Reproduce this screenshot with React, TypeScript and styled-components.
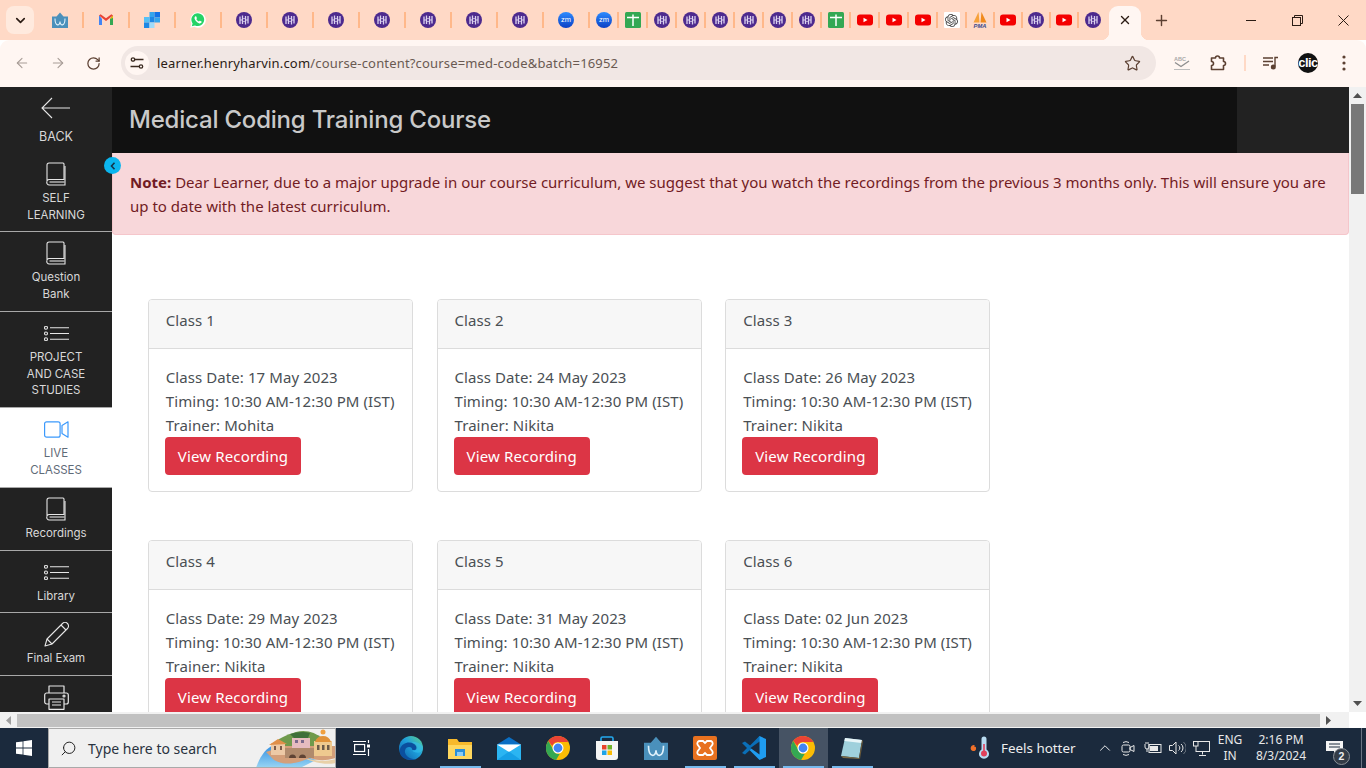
import React from "react";
import styled, { createGlobalStyle } from "styled-components";
import { ArrowRight, ArrowLeft, RotateCw, Star, Plus, ChevronDown, ChevronUp, Search, X } from "lucide-react";
import { SiOpenai } from "react-icons/si";

const Global = createGlobalStyle`
  html, body { margin: 0; padding: 0; height: 100%; overflow: hidden; background: #fff; }
  * { box-sizing: border-box; }
  body { font-family: "Noto Sans", "Open Sans", sans-serif; }
`;

const Shell = styled.div`
  width: 1366px; height: 768px; display: flex; flex-direction: column; overflow: hidden;
`;

/* ---------- browser chrome ---------- */
const TabStrip = styled.div`
  height: 40px; background: #ffd9c6; display: flex; align-items: center; flex: none;
`;
const TabSearch = styled.div`
  width: 28px; height: 28px; margin: 0 4px 0 6px; border-radius: 8px; background: #ffeade;
  display: flex; align-items: center; justify-content: center; color: #2b1c14;
`;
const Tab = styled.div<{ $w: number; $plain?: boolean }>`
  width: ${p => p.$w}px; height: 16px; flex: none; display: flex; align-items: center; justify-content: center;
  border-right: ${p => (p.$plain ? "0" : "2px solid #ffb88a")};
  svg { flex: none; }
`;
const GptBox = styled.div`
  width: 16px; height: 16px; background: #fff; border-radius: 1px; display: flex; align-items: center; justify-content: center; color: #444;
`;
const ActiveTab = styled.div`
  position: relative; width: 32px; height: 34px; margin: 6px 0 0 2px; border-radius: 9px 9px 0 0; background: #fff6f2;
  display: flex; align-items: center; justify-content: center; color: #2b1c14; padding-bottom: 6px;
  &::before, &::after { content: ""; position: absolute; bottom: 0; width: 8px; height: 8px; }
  &::before { left: -8px; background: radial-gradient(circle at 0 0, #ffd9c6 8px, #fff6f2 8.5px); }
  &::after { right: -8px; background: radial-gradient(circle at 100% 0, #ffd9c6 8px, #fff6f2 8.5px); }
`;
const NewTab = styled.div`
  width: 28px; margin-left: 6px; display: flex; justify-content: center; color: #5c4032;
`;
const WinButtons = styled.div`
  margin-left: auto; display: flex; color: #2b1c14; height: 40px;
`;
const WinBtn = styled.div`
  width: 46px; display: flex; align-items: center; justify-content: center;
`;
const Toolbar = styled.div`
  height: 47px; background: #fff6f2; border-radius: 9px 9px 0 0; display: flex; align-items: flex-start; flex: none; padding-top: 6px; position: relative; z-index: 1;
`;
const NavBtn = styled.div<{ $w: number; $off?: boolean; $lead?: number }>`
  width: ${p => p.$w}px; height: 34px; flex: none; display: flex; align-items: center; justify-content: center;
  margin-left: ${p => p.$lead ?? 0}px;
  color: ${p => (p.$off ? "#a79c96" : "#5c4032")};
`;
const Omnibox = styled.div`
  width: 1035px; height: 34px; margin: 0 8px 0 9px; flex: none; background: #f1e7e4; border-radius: 17px; display: flex; align-items: center; padding: 0 4px; color: #5c4032;
`;
const SiteInfo = styled.div`
  width: 24px; height: 24px; border-radius: 50%; background: #fff6f2; display: flex; align-items: center; justify-content: center; flex: none;
`;
const Url = styled.div`
  margin-left: 8px; font-size: 13px; letter-spacing: 0.17px; color: #6a5a52; white-space: nowrap; flex: 1;
  b { font-weight: 400; color: #2b1c14; }
`;
const Divider = styled.div`
  width: 2px; height: 16px; background: #ffd9c6; margin: 9px 12px 9px 8px; flex: none;
`;
const Avatar = styled.div`
  width: 20px; height: 20px; border-radius: 50%; background: #111; color: #fff; overflow: hidden;
  font: 700 13px/20px "Liberation Sans", sans-serif; text-align: center; letter-spacing: -.6px;
`;

/* ---------- viewport ---------- */
const Viewport = styled.div`
  height: 625px; flex: none; display: flex; overflow: hidden;
`;
const Page = styled.div`
  width: 1349px; flex: none; display: flex; position: relative; overflow: hidden;
`;
const Sidebar = styled.nav`
  width: 112px; flex: none; background: #222; display: flex; flex-direction: column;
`;
const NavItem = styled.div<{ $h: number; $active?: boolean; $line?: boolean }>`
  height: ${p => p.$h}px; flex: none; padding-top: 9px; display: flex; flex-direction: column; align-items: center; gap: 4px;
  background: ${p => (p.$active ? "#fff" : "#222")};
  color: ${p => (p.$active ? "#5f6b78" : "#d8d8d8")};
  border-bottom: ${p => (p.$line ? "1px solid #a8a8a8" : "0")};
`;
const NavIcon = styled.div<{ $active?: boolean; $shift?: number }>`
  height: 24px; flex: none; display: flex; align-items: center; justify-content: center;
  margin-right: ${p => p.$shift ?? 0}px;
  color: ${p => (p.$active ? "#3b99fc" : "#e6e6e6")};
`;
const NavLabel = styled.div<{ $size?: number; $top?: number }>`
  font: 400 ${p => p.$size ?? 11.5}px/16.5px "Inter", sans-serif; text-align: center; letter-spacing: -0.03px;
  margin-top: ${p => p.$top ?? 0}px;
  max-width: 100px;
`;
const Toggle = styled.div`
  position: absolute; left: 104px; top: 70px; width: 17px; height: 17px; border-radius: 50%; background: #0bb5ee; color: #14344a;
  display: flex; align-items: center; justify-content: center;
`;
const Main = styled.main`
  flex: 1; min-width: 0; display: flex; flex-direction: column;
`;
const TitleBar = styled.header`
  height: 66px; flex: none; display: flex; background: #222;
`;
const TitleBlock = styled.div`
  width: 1125px; background: #111; display: flex; align-items: center; padding-left: 17px;
`;
const Title = styled.h1`
  margin: 0; font: 500 24px/1 "Inter", sans-serif; color: #c9c9c9; letter-spacing: -0.2px; white-space: nowrap;
`;
const Alert = styled.div`
  height: 82px; flex: none; background: #f8d7da; border: 1px solid #f5c6cb; border-top: 0; border-radius: 0 0 4px 4px;
  padding: 17px 17px 0; color: #721c24; font-size: 15px; line-height: 24px; white-space: nowrap;
  b { font-weight: 700; }
`;
const CardGrid = styled.div`
  display: grid; grid-template-columns: repeat(3, 265px); column-gap: 23.7px; row-gap: 48px; padding: 64px 0 0 36px;
`;
const Card = styled.article`
  border: 1px solid #dcdcdc; border-radius: 4px; background: #fff; overflow: hidden; height: 193px;
`;
const CardHeader = styled.div`
  height: 49px; background: #f7f7f7; border-bottom: 1px solid #dcdcdc; padding: 8px 16.8px; font-size: 15px; line-height: 24px; color: #4a4f54; letter-spacing: .08px;
`;
const CardBody = styled.div`
  padding: 16px 16.8px; font-size: 15px; line-height: 24px; color: #4a4f54; white-space: nowrap; letter-spacing: .08px;
`;
const DangerButton = styled.div`
  display: inline-block; height: 38px; width: 136px; margin-left: -.8px; border-radius: 4px; background: #dc3545; color: #fff;
  font-size: 15px; line-height: 38px; text-align: center; letter-spacing: .15px;
`;
const VScroll = styled.div`
  width: 17px; flex: none; background: #f1f1f1; display: flex; flex-direction: column; align-items: center;
`;
const ArrowCell = styled.div`
  height: 17px; flex: none; width: 100%; display: flex; align-items: center; justify-content: center;
`;
const VThumb = styled.div`
  width: 13px; height: 90px; background: #787878; flex: none;
`;
const ScrollGap = styled.div`
  flex: 1;
`;
const HScroll = styled.div`
  height: 16px; flex: none; background: #f1f1f1; display: flex; align-items: center;
`;
const HThumb = styled.div`
  width: 1303px; height: 13px; background: #c1c1c1; flex: none;
`;
const HArrow = styled.div`
  width: 17px; height: 16px; flex: none; display: flex; align-items: center; justify-content: center;
`;
const HCorner = styled.div`
  margin-left: 12px; width: 17px; height: 16px; background: #fff; flex: none;
`;

/* ---------- taskbar ---------- */
const Taskbar = styled.footer`
  height: 40px; flex: none; background: #1b2a3d; display: flex; align-items: stretch; color: #fff;
`;
const StartCell = styled.div`
  width: 48px; display: flex; align-items: center; justify-content: center; flex: none;
`;
const SearchBox = styled.div`
  width: 288px; flex: none; background: #f0f0f0; border: 1px solid #a9a9a9; display: flex; align-items: center; padding-left: 11px; position: relative; overflow: hidden; color: #222;
`;
const SearchIcon = styled(Search)`
  transform: scaleX(-1);
`;
const SearchText = styled.span`
  margin-left: 11px; font-size: 14px; color: #2a3340;
`;
const SearchArt = styled.div`
  position: absolute; right: -1px; top: -1px; height: 40px;
`;
const TaskCell = styled.div<{ $w?: number; $on?: boolean; $open?: boolean }>`
  width: ${p => p.$w ?? 49}px; flex: none; position: relative; display: flex; align-items: center; justify-content: center;
  background: ${p => (p.$on ? "#465364" : "transparent")};
  &::after { content: ""; display: ${p => (p.$open ? "block" : "none")}; position: absolute; bottom: 0; left: 4px; right: 4px; height: 2px; background: #76b9ed; }
`;
const Tray = styled.div`
  margin-left: auto; display: flex; align-items: stretch; flex: none;
`;
const TrayCell = styled.div<{ $w: number }>`
  width: ${p => p.$w}px; flex: none; display: flex; align-items: center; justify-content: center; position: relative;
`;
const Weather = styled.div`
  width: 126px; flex: none; display: flex; align-items: center; gap: 11px; padding-left: 3px; font-size: 13.4px; color: #eee; white-space: nowrap;
`;
const TrayText = styled.div`
  font-size: 12px; line-height: 16px; text-align: center; color: #e8e8e8; white-space: nowrap;
`;
const Badge = styled.div`
  position: absolute; left: 17px; top: 20px; width: 17px; height: 17px; border-radius: 50%; background: #333c47; border: 1px solid #8a8f96;
  font: 700 10.5px/15px "Liberation Sans", sans-serif; text-align: center; color: #eee;
`;
const DesktopEdge = styled.div`
  width: 14px; flex: none; position: relative;
  &::before { content: ""; position: absolute; left: 9px; top: 0; bottom: 0; width: 1px; background: #6a7584; }
`;

/* ---------- drawings ---------- */
const HH = () => (
  <svg width="16" height="16" viewBox="0 0 16 16">
    <circle cx="8" cy="8" r="8" fill="#4d2a8e" />
    <g stroke="#d9d0ee" fill="none">
      <path d="M4 4.500v7.500M6.500 3.500v8.500M9.500 4v8.500M12 4v7.500" strokeWidth="1.300" />
      <path d="M4 8h2.500M9.500 8H12" strokeWidth="1" />
      <path d="M6.500 6.500h3M6.500 9.500h3" strokeWidth=".7" />
    </g>
  </svg>
);
const Wonder = ({ s = 16 }: { s?: number }) => (
  <svg width={s} height={s} viewBox="0 0 16 16">
    <path d="M0 4.500h4.500L8 .5l3.500 4H16V16H0z" fill="#4a90bb" />
    <path d="M3 6.500c0 8.500 5 7.500 5 3 0 4.500 5 5.500 5-3" stroke="#dff1fb" strokeWidth="1.100" fill="none" />
  </svg>
);
const Gmail = () => (
  <svg width="16" height="16" viewBox="0 0 16 16">
    <path d="M1 3v10h3V7z" fill="#4285f4" /><path d="M15 3v10h-3V7z" fill="#34a853" />
    <path d="M1 3.500L8 9l7-5.500-1.600-1.300L8 6.200 2.600 2.200z" fill="#ea4335" /><path d="M12 7l3-3.500V6z" fill="#fbbc04" />
  </svg>
);
const Squares = () => (
  <svg width="16" height="16" viewBox="0 0 16 16">
    <rect x="5.500" y="0" width="5" height="5" fill="#35a5ec" /><rect x="10.500" y="0" width="5.500" height="5.500" fill="#1473e6" />
    <rect x="5.500" y="5" width="5" height="5.500" fill="#1e88e5" /><rect x="10.500" y="5.500" width="5.500" height="5" fill="#35a5ec" />
    <rect x="0" y="5" width="5.500" height="5.500" fill="#55c0f5" /><rect x="0" y="10.500" width="5.500" height="5.500" fill="#1e88e5" />
    <rect x="5.500" y="10.500" width="5" height="5.500" fill="#9fdcfb" />
  </svg>
);
const Whats = () => (
  <svg width="16" height="16" viewBox="0 0 16 16">
    <path d="M.3 15.700l1.100-4A7.700 7.700 0 1 1 4.400 14.700z" fill="#fff" />
    <path d="M1.800 14.200l.8-2.800A6.400 6.400 0 1 1 5 13.400z" fill="#25d366" />
    <path d="M5.500 4.300c-.9.600-1.300 1.700-.7 3 .8 1.800 2.200 3.200 4 3.900 1.300.5 2.300 0 2.800-1 .2-.4.100-.6-.1-.7l-1.500-.8c-.3-.1-.4 0-.6.200l-.5.600c-1.200-.5-2.100-1.400-2.600-2.500l.5-.5c.2-.2.2-.4.100-.6l-.7-1.500c-.1-.3-.4-.3-.7-.1z" fill="#fff" />
  </svg>
);
const Zoom = () => (
  <svg width="16" height="16" viewBox="0 0 16 16">
    <defs><linearGradient id="zg" x1="0" y1="0" x2="0" y2="1"><stop offset="0" stopColor="#2d8cff" /><stop offset="1" stopColor="#0b3fc4" /></linearGradient></defs>
    <circle cx="8" cy="8" r="8" fill="url(#zg)" />
    <text x="8" y="10.200" textAnchor="middle" fontSize="7.500" fontWeight="400" fill="#fff" fontFamily="Liberation Sans">zm</text>
  </svg>
);
const Cross = () => (
  <svg width="16" height="16" viewBox="0 0 16 16">
    <rect width="16" height="16" rx="1.500" fill="#34a853" />
    <path d="M2 5.500h12M8 2.500v11.500" stroke="#fff" strokeWidth="1.500" />
  </svg>
);
const YT = () => (
  <svg width="16" height="16" viewBox="0 0 16 16">
    <rect x="0" y="2.500" width="16" height="11" rx="3" fill="#f40000" />
    <path d="M6.500 5.800L10.500 8l-4 2.200z" fill="#fff" />
  </svg>
);
const GPT = () => <GptBox><SiOpenai size={13} /></GptBox>;
const PMA = () => (
  <svg width="16" height="16" viewBox="0 0 16 16">
    <path d="M1.500 10.500L6.500 0l1 10.500z" fill="#f6a13a" /><path d="M8.500 10.500L9.500 0 14.500 10.500z" fill="#f08a1d" />
    <text x="8" y="15.500" textAnchor="middle" fontSize="5.800" fontWeight="700" fontStyle="italic" fill="#3b4a8c" fontFamily="Liberation Sans">PMA</text>
  </svg>
);

const Tune = () => (
  <svg width="16" height="16" viewBox="0 0 16 16" fill="none" stroke="#3a2a20" strokeWidth="1.300">
    <circle cx="4" cy="4.500" r="1.700" /><path d="M6 4.500h8.500M1.500 11.500h8.500" /><circle cx="12" cy="11.500" r="1.700" />
  </svg>
);
const Abc = () => (
  <svg width="18" height="16" viewBox="0 0 18 16">
    <text x="1" y="6" fontSize="5.500" fill="#a8a8a8" fontWeight="700" fontFamily="Liberation Sans">ABC</text>
    <path d="M2 7.500l6 4L16 6" stroke="#8f8f8f" strokeWidth="1.400" fill="none" /><path d="M1 14.500h16" stroke="#bdbdbd" strokeWidth="1" />
  </svg>
);
const Puzzle = () => (
  <svg width="18" height="18" viewBox="0 0 18 18" fill="none" stroke="#5c4032" strokeWidth="1.600">
    <path d="M2.500 4h4a2 2 0 0 1 4 0h4v3.500a2 2 0 0 1 0 4v4h-12v-4a2 2 0 0 0 0-4z" strokeLinejoin="round" />
  </svg>
);
const Media = () => (
  <svg width="16" height="14" viewBox="0 0 16 14" fill="none" stroke="#5c4032" strokeWidth="1.400">
    <path d="M0 2h10M0 5.500h10M0 9h6" /><path d="M12 10.500V1.500h3" /><circle cx="10.300" cy="11" r="1.800" fill="#5c4032" />
  </svg>
);
const Dots = () => (
  <svg width="4" height="16" viewBox="0 0 4 16" fill="#5c4032"><circle cx="2" cy="2" r="1.600" /><circle cx="2" cy="8" r="1.600" /><circle cx="2" cy="14" r="1.600" /></svg>
);
const Minimize = () => (
  <svg width="11" height="11" viewBox="0 0 11 11" fill="#2b1c14"><rect x="0" y="5" width="10" height="1" /></svg>
);
const Restore = () => (
  <svg width="11" height="11" viewBox="0 0 11 11" fill="none" stroke="#2b1c14" strokeWidth="1">
    <rect x=".5" y="2.500" width="8" height="8" /><path d="M2.500 2.500v-2h8v8h-2" />
  </svg>
);
const CloseWin = () => (
  <svg width="11" height="11" viewBox="0 0 11 11" fill="none" stroke="#2b1c14" strokeWidth="1"><path d="M.5 .5l10 10M10.500 .5l-10 10" /></svg>
);

const BackArrow = () => (
  <svg width="29" height="22" viewBox="0 0 29 22" fill="none" stroke="currentColor" strokeWidth="1.100"><path d="M29 11H1M11 1L1 11l10 10" /></svg>
);
const Book = () => (
  <svg width="20" height="24" viewBox="0 0 20 24" fill="none" stroke="currentColor" strokeWidth="1.100">
    <path d="M3 1h14a1.500 1.500 0 0 1 1 1v15.500H3a2 2 0 0 0-2 2V3a2 2 0 0 1 2-2z" />
    <path d="M1 19.500A2.500 2.500 0 0 0 3.500 23H19V4" />
    <path d="M3.500 20h15" />
  </svg>
);
const ListI = () => (
  <svg width="25" height="15" viewBox="0 0 25 15" fill="none" stroke="currentColor" strokeWidth="1.100">
    <circle cx="2" cy="1.800" r="1.500" /><circle cx="2" cy="7.500" r="1.500" /><circle cx="2" cy="13.200" r="1.500" />
    <path d="M6 1.800h19M6 7.500h19M6 13.200h19" />
  </svg>
);
const Cam = () => (
  <svg width="25" height="17" viewBox="0 0 25 17" fill="none" stroke="currentColor" strokeWidth="1.200">
    <rect x=".6" y=".8" width="15.500" height="15.400" rx="2" /><path d="M24 .8v15.400L18 12.500v-8z" strokeLinejoin="round" />
  </svg>
);
const Pencil = () => (
  <svg width="25" height="25" viewBox="0 0 25 25" fill="none" stroke="currentColor" strokeWidth="1.100" strokeLinejoin="round">
    <path d="M1 24l2-7L18.500 1.500a3 3 0 0 1 5 5L8 22z" /><path d="M3 17l5 5M17 3l5 5" />
  </svg>
);
const Printer = () => (
  <svg width="25" height="25" viewBox="0 0 25 25" fill="none" stroke="currentColor" strokeWidth="1.200" strokeLinejoin="round">
    <path d="M5 8V1h15v7" /><rect x=".7" y="8" width="23.600" height="11" rx="2" /><rect x="5" y="14" width="15" height="10.300" fill="#222" />
    <path d="M8 17h9M8 20h9" /><circle cx="20" cy="11" r="1" />
  </svg>
);

const Win = () => (
  <svg width="16" height="16" viewBox="0 0 16 16" fill="#fff"><path d="M0 2.300l6.600-.9v6.200H0zM7.400 1.300L16 0v7.600H7.400zM0 8.400h6.600v6.200L0 13.700zM7.400 8.400H16V16l-8.600-1.200z" /></svg>
);
const Lake = () => (
  <svg width="82" height="40" viewBox="0 0 82 40">
    <defs><linearGradient id="sea" x1="0" y1="0" x2="0" y2="1"><stop offset="0" stopColor="#2f8de0" /><stop offset="1" stopColor="#9ad6f4" /></linearGradient></defs>
    <path d="M2 40C6 28 12 20 20 17L62 32 46 40z" fill="url(#sea)" />
    <path d="M52 30c8 3 18 4 30 1v4c-10 2-20 0-30-4z" fill="#e8d0a8" />
    <path d="M18 18C24 10 32 7 42 4c10-3 20 1 26 6v10H30z" fill="#6f9a4c" />
    <path d="M36 6c6-2 14-3 20-1l-2 5H40z" fill="#3f6f3a" />
    <path d="M12 24l8 8c8 5 20 4 28 1l8-3c8 3 16 3 26 0V18H30z" fill="#d49f7a" />
    <rect x="17" y="15" width="14" height="12" fill="#edc9a6" /><path d="M15 17l9-6 9 5z" fill="#e08f4a" />
    <path d="M20 18h2v4h-2zM26 18h2v4h-2z" fill="#7a5a4a" />
    <rect x="38" y="10" width="18" height="10" fill="#e6bcc0" /><path d="M41 12h3v3h-3zM47 12h3v3h-3z" fill="#7b6a8c" />
    <rect x="31" y="20" width="29" height="10" fill="#b08a6c" /><path d="M35 30a3.500 3.500 0 0 1 7 0zM45 30a3.500 3.500 0 0 1 7 0z" fill="#5e4334" />
    <rect x="60" y="13" width="18" height="15" fill="#eec98f" /><path d="M61 14a8.500 9 0 0 1 16 0z" fill="#e0923a" /><circle cx="69" cy="4" r="2.500" fill="#f0a040" />
    <path d="M63 17h2.500v5H63zM68 17h2.500v5H68zM73 17h2.500v5H73z" fill="#6a5a4a" />
  </svg>
);
const TaskView = () => (
  <svg width="17" height="16" viewBox="0 0 17 16" fill="none" stroke="#fff" strokeWidth="1.200">
    <rect x="1.600" y="4.500" width="10" height="7" /><path d="M0 1.500h13M0 14.500h13M15.500 0v3M15.500 9v7" /><rect x="14" y="4.500" width="3" height="3" fill="#fff" stroke="none" />
  </svg>
);
const Edge = () => (
  <svg width="24" height="24" viewBox="0 0 24 24">
    <defs>
      <linearGradient id="eg" x1="0" y1="1" x2="1" y2="0"><stop offset="0" stopColor="#0c59a4" /><stop offset=".55" stopColor="#1fa0dc" /><stop offset="1" stopColor="#5fd38a" /></linearGradient>
    </defs>
    <circle cx="12" cy="12" r="12" fill="url(#eg)" />
    <path d="M1 13C3 7 10 5 15 8c3 2 3 5 1 6-1 .6-3 .3-3-.6 0-3-6-3.400-7 1-1 4 4 9 11 8.600C8 26-1 21 1 13z" fill="#0b4f9e" />
    <path d="M24 13c-1 3.500-4 4-7 3.500-3-.5-4-2-4-3 1 .8 3 1 4 .4 2-1 2-4-1-6-1.500-1-3-1.300-4-1.300C15 5 24 7 24 13z" fill="#35c1f1" opacity=".55" />
  </svg>
);
const Explorer = () => (
  <svg width="24" height="22" viewBox="0 0 24 22">
    <path d="M0 2h9l2 3h13v17H0z" fill="#f7b92b" /><rect y="8" width="24" height="14" fill="#ffd75e" />
    <path d="M7 12h10v7h-2v-4H9v4H7z" fill="#2a8fd8" /><rect x="9" y="15" width="6" height="4" fill="#8ccdf5" />
  </svg>
);
const Mail = () => (
  <svg width="24" height="23" viewBox="0 0 24 23">
    <path d="M0 7.500L12 0l12 7.500L12 15z" fill="#0a6fc4" /><rect y="7.500" width="24" height="15.500" fill="#2bb5f2" />
    <path d="M0 7.500h24L12 15z" fill="#fff" />
    <path d="M0 23L12 14.500 24 23z" fill="#17a0e6" />
  </svg>
);
const Chrome = () => (
  <svg width="24" height="24" viewBox="0 0 24 24">
    <circle cx="12" cy="12" r="12" fill="#fbbc04" />
    <path d="M12 0a12 12 0 0 1 10.400 6H12a6 6 0 0 0-5.700 4L2.300 5A12 12 0 0 1 12 0z" fill="#ea4335" />
    <path d="M2.300 5l5 8.700a6 6 0 0 0 6.500 4.100L10 24A12 12 0 0 1 2.300 5z" fill="#34a853" />
    <circle cx="12" cy="12" r="5.500" fill="#fff" /><circle cx="12" cy="12" r="4.400" fill="#4285f4" />
  </svg>
);
const Store = () => (
  <svg width="24" height="24" viewBox="0 0 24 24">
    <path d="M6 6V2.500A1.500 1.500 0 0 1 7.500 1h9A1.500 1.500 0 0 1 18 2.500V6" stroke="#24a9ee" strokeWidth="1.600" fill="none" />
    <path d="M1 5h22v16a3 3 0 0 1-3 3H4a3 3 0 0 1-3-3z" fill="#f5f5f5" />
    <rect x="7" y="9" width="4.500" height="4.500" fill="#e8442b" /><rect x="12.500" y="9" width="4.500" height="4.500" fill="#6fb32b" />
    <rect x="7" y="14.500" width="4.500" height="4.500" fill="#1fa4e8" /><rect x="12.500" y="14.500" width="4.500" height="4.500" fill="#fbbc04" />
  </svg>
);
const Xampp = () => (
  <svg width="24" height="24" viewBox="0 0 24 24">
    <rect width="24" height="24" rx="2" fill="#e8711f" />
    <path d="M7 5h3l2 2 2-2h3a2.500 2.500 0 0 1 2.500 3.500L17 12l2.500 3.500A2.500 2.500 0 0 1 17 19h-3l-2-2-2 2H7a2.500 2.500 0 0 1-2.500-3.500L7 12 4.500 8.500A2.500 2.500 0 0 1 7 5z" fill="none" stroke="#fff" strokeWidth="1.800" />
  </svg>
);
const VSCode = () => (
  <svg width="24" height="24" viewBox="0 0 24 24">
    <path d="M17.500 0L24 3v18l-6.500 3L7 13.500z" fill="#1f9cf0" /><path d="M17.500 0L8 9.500 3 5.500 0 7l5 5-5 5 3 1.500 14.500-13z" fill="#0a6fb8" />
    <path d="M17.500 5.500V18.500L8.500 12z" fill="#1b2a3d" />
  </svg>
);
const Notes = () => (
  <svg width="24" height="24" viewBox="0 0 24 24">
    <path d="M5 2l17 2-3 18L1 20z" fill="#9fd0dc" /><path d="M5 2l17 2-.6 3L4.400 5z" fill="#e8f5f8" /><path d="M1 20l18 2 .5 1L3 22z" fill="#7a6a45" />
    <path d="M22 4l1 1-3 18-1-1z" fill="#6a5a3a" />
  </svg>
);
const Thermo = () => (
  <svg width="20" height="24" viewBox="0 0 20 24">
    <path d="M1.500 10c-1.500 2-1 4.500 1.500 5 2.500.5 4-2 2.500-4.500-.5 1-1 1-1-1.500-1 0-2.300 0-3 1z" fill="#f0702a" />
    <path d="M11.500 3a2.500 2.500 0 0 1 5 0v10.500a5 5 0 1 1-5 0z" fill="#b9dcf2" />
    <rect x="13.200" y="8" width="1.600" height="9" fill="#e0405a" /><circle cx="14" cy="17.500" r="3" fill="#e0405a" />
  </svg>
);
const CamTray = () => (
  <svg width="16" height="16" viewBox="0 0 16 16" fill="none" stroke="#e8e8e8" strokeWidth="1">
    <rect x="1" y="5" width="8" height="7" rx="1.500" /><path d="M9 7.500l4-2v6l-4-2z" /><path d="M2 2.500a6 6 0 0 1 6 0M2 14.500a6 6 0 0 0 6 0" />
  </svg>
);
const Battery = () => (
  <svg width="18" height="12" viewBox="0 0 18 12">
    <rect x="5" y="2.500" width="12" height="8" fill="none" stroke="#e8e8e8" /><rect x="6" y="4" width="8" height="5" fill="#e8e8e8" />
    <path d="M1 2v3a2 2 0 0 0 4 0V2M2 0v2M4 0v2M3 7v3" stroke="#e8e8e8" fill="none" />
  </svg>
);
const Speaker = () => (
  <svg width="17" height="14" viewBox="0 0 17 14" fill="none" stroke="#e8e8e8" strokeWidth="1">
    <path d="M.5 4.500h3L7 1v12L3.500 9.500h-3z" /><path d="M9.500 4.500a3 3 0 0 1 0 5M12 3a5 5 0 0 1 0 8" /><path d="M14.500 1a8 8 0 0 1 0 12" opacity=".4" />
  </svg>
);
const Net = () => (
  <svg width="17" height="15" viewBox="0 0 17 15" fill="none" stroke="#e8e8e8" strokeWidth="1">
    <rect x="3" y=".5" width="13.500" height="10" /><path d="M9.500 10.500v3M6 14.500h7" /><rect x=".5" y=".5" width="4.500" height="4.500" fill="#1b2a3d" />
  </svg>
);
const Note = () => (
  <svg width="17" height="14" viewBox="0 0 17 14" fill="#f4f4f4">
    <path d="M0 0h17v10h-6l-3 3.500V10H0z" /><path d="M3 3h11M3 6h11" stroke="#1b2a3d" strokeWidth="1" />
  </svg>
);

/* ---------- data ---------- */
const tabs: { w: number; icon: React.ReactNode; plain?: boolean }[] = [
  { w: 46, icon: <Wonder /> }, { w: 46, icon: <Gmail /> }, { w: 46, icon: <Squares /> }, { w: 46, icon: <Whats /> },
  { w: 46, icon: <HH /> }, { w: 46, icon: <HH /> }, { w: 46, icon: <HH /> }, { w: 46, icon: <HH /> }, { w: 46, icon: <HH /> }, { w: 46, icon: <HH /> }, { w: 46, icon: <HH /> },
  { w: 46, icon: <Zoom /> }, { w: 29, icon: <Zoom /> }, { w: 29, icon: <Cross /> },
  { w: 29, icon: <HH /> }, { w: 29, icon: <HH /> }, { w: 29, icon: <HH /> }, { w: 29, icon: <HH /> }, { w: 29, icon: <HH /> }, { w: 29, icon: <HH /> },
  { w: 29, icon: <Cross /> }, { w: 29, icon: <YT /> }, { w: 29, icon: <YT /> }, { w: 29, icon: <YT /> }, { w: 29, icon: <GPT /> }, { w: 28, icon: <PMA /> },
  { w: 28, icon: <YT /> }, { w: 28, icon: <HH /> }, { w: 28, icon: <YT /> }, { w: 28, icon: <HH />, plain: true },
];

const navItems: { h: number; icon: React.ReactNode; label: React.ReactNode; line?: boolean; active?: boolean }[] = [
  { h: 79, icon: <Book />, label: <>SELF<br />LEARNING</>, line: true },
  { h: 80, icon: <Book />, label: <>Question<br />Bank</>, line: true },
  { h: 96, icon: <ListI />, label: <>PROJECT<br />AND CASE<br />STUDIES</>, line: true },
  { h: 80, icon: <Cam />, label: <>LIVE<br />CLASSES</>, line: true, active: true },
  { h: 63, icon: <Book />, label: "Recordings", line: true },
  { h: 62, icon: <ListI />, label: "Library", line: true },
  { h: 63, icon: <Pencil />, label: "Final Exam", line: true },
  { h: 60, icon: <Printer />, label: "" },
];

const classes = [
  { n: 1, d: "17 May 2023", t: "Mohita" },
  { n: 2, d: "24 May 2023", t: "Nikita" },
  { n: 3, d: "26 May 2023", t: "Nikita" },
  { n: 4, d: "29 May 2023", t: "Nikita" },
  { n: 5, d: "31 May 2023", t: "Nikita" },
  { n: 6, d: "02 Jun 2023", t: "Nikita" },
];

const taskApps: { icon: React.ReactNode; on?: boolean; open?: boolean }[] = [
  { icon: <Edge /> }, { icon: <Explorer />, open: true }, { icon: <Mail /> }, { icon: <Chrome /> }, { icon: <Store /> },
  { icon: <Wonder s={24} /> }, { icon: <Xampp />, open: true }, { icon: <VSCode />, open: true }, { icon: <Chrome />, on: true, open: true }, { icon: <Notes />, open: true },
];

export default function App() {
  return (
    <Shell>
      <Global />
      <TabStrip>
        <TabSearch><ChevronDown size={15} strokeWidth={2.600} /></TabSearch>
        {tabs.map((t, i) => <Tab key={i} $w={t.w} $plain={t.plain}>{t.icon}</Tab>)}
        <ActiveTab><X size={14} strokeWidth={2.400} /></ActiveTab>
        <NewTab><Plus size={17} strokeWidth={2} /></NewTab>
        <WinButtons>
          <WinBtn><Minimize /></WinBtn>
          <WinBtn><Restore /></WinBtn>
          <WinBtn><CloseWin /></WinBtn>
        </WinButtons>
      </TabStrip>
      <Toolbar>
        <NavBtn $w={40} $off $lead={2}><ArrowLeft size={16} strokeWidth={1.600} /></NavBtn>
        <NavBtn $w={32} $off><ArrowRight size={16} strokeWidth={1.600} /></NavBtn>
        <NavBtn $w={38}><RotateCw size={15} strokeWidth={2} /></NavBtn>
        <Omnibox>
          <SiteInfo><Tune /></SiteInfo>
          <Url><b>learner.henryharvin.com</b>/course-content?course=med-code&amp;batch=16952</Url>
          <NavBtn $w={40}><Star size={17} strokeWidth={1.700} /></NavBtn>
        </Omnibox>
        <NavBtn $w={36}><Abc /></NavBtn>
        <NavBtn $w={36}><Puzzle /></NavBtn>
        <Divider />
        <NavBtn $w={26}><Media /></NavBtn>
        <NavBtn $w={48}><Avatar>clic</Avatar></NavBtn>
        <NavBtn $w={24}><Dots /></NavBtn>
      </Toolbar>
      <Viewport>
        <Page>
          <Sidebar>
            <NavItem $h={66}>
              <NavIcon $shift={2}><BackArrow /></NavIcon>
              <NavLabel $size={12.500} $top={5}>BACK</NavLabel>
            </NavItem>
            {navItems.map((n, i) => (
              <NavItem key={i} $h={n.h} $line={n.line} $active={n.active}>
                <NavIcon $active={n.active}>{n.icon}</NavIcon>
                <NavLabel>{n.label}</NavLabel>
              </NavItem>
            ))}
          </Sidebar>
          <Toggle>
            <svg width="6" height="8" viewBox="0 0 6 8" fill="none" stroke="currentColor" strokeWidth="1.600"><path d="M4.500 .8L1.500 4l3 3.200" /></svg>
          </Toggle>
          <Main>
            <TitleBar>
              <TitleBlock><Title>Medical Coding Training Course</Title></TitleBlock>
            </TitleBar>
            <Alert>
              <b>Note:</b> Dear Learner, due to a major upgrade in our course curriculum, we suggest that you watch the recordings from the previous 3 months only. This will ensure you are<br />
              up to date with the latest curriculum.
            </Alert>
            <CardGrid>
              {classes.map(c => (
                <Card key={c.n}>
                  <CardHeader>Class {c.n}</CardHeader>
                  <CardBody>
                    Class Date: {c.d}<br />
                    Timing: 10:30 AM-12:30 PM (IST)<br />
                    Trainer: {c.t}<br />
                    <DangerButton>View Recording</DangerButton>
                  </CardBody>
                </Card>
              ))}
            </CardGrid>
          </Main>
        </Page>
        <VScroll>
          <ArrowCell><svg width="9" height="5" viewBox="0 0 9 5" fill="#505050"><path d="M4.500 0L9 5H0z" /></svg></ArrowCell>
          <VThumb />
          <ScrollGap />
          <ArrowCell><svg width="9" height="5" viewBox="0 0 9 5" fill="#505050"><path d="M0 0h9L4.500 5z" /></svg></ArrowCell>
        </VScroll>
      </Viewport>
      <HScroll>
        <HArrow><svg width="5" height="9" viewBox="0 0 5 9" fill="#a0a0a0"><path d="M5 0v9L0 4.500z" /></svg></HArrow>
        <HThumb />
        <HArrow><svg width="5" height="9" viewBox="0 0 5 9" fill="#505050"><path d="M0 0v9l5-4.500z" /></svg></HArrow>
        <HCorner />
      </HScroll>
      <Taskbar>
        <StartCell><Win /></StartCell>
        <SearchBox>
          <SearchIcon size={17} strokeWidth={1.400} />
          <SearchText>Type here to search</SearchText>
          <SearchArt><Lake /></SearchArt>
        </SearchBox>
        <TaskCell $w={50.500}><TaskView /></TaskCell>
        {taskApps.map((a, i) => <TaskCell key={i} $on={a.on} $open={a.open}>{a.icon}</TaskCell>)}
        <Tray>
          <Weather><Thermo /><span>Feels hotter</span></Weather>
          <TrayCell $w={24}><ChevronUp size={18} strokeWidth={1.200} /></TrayCell>
          <TrayCell $w={24}><CamTray /></TrayCell>
          <TrayCell $w={24}><Battery /></TrayCell>
          <TrayCell $w={24}><Speaker /></TrayCell>
          <TrayCell $w={25}><Net /></TrayCell>
          <TrayCell $w={32}><TrayText>ENG<br />IN</TrayText></TrayCell>
          <TrayCell $w={70}><TrayText>2:16 PM<br />8/3/2024</TrayText></TrayCell>
          <TrayCell $w={36}><Note /><Badge>2</Badge></TrayCell>
          <DesktopEdge />
        </Tray>
      </Taskbar>
    </Shell>
  );
}
